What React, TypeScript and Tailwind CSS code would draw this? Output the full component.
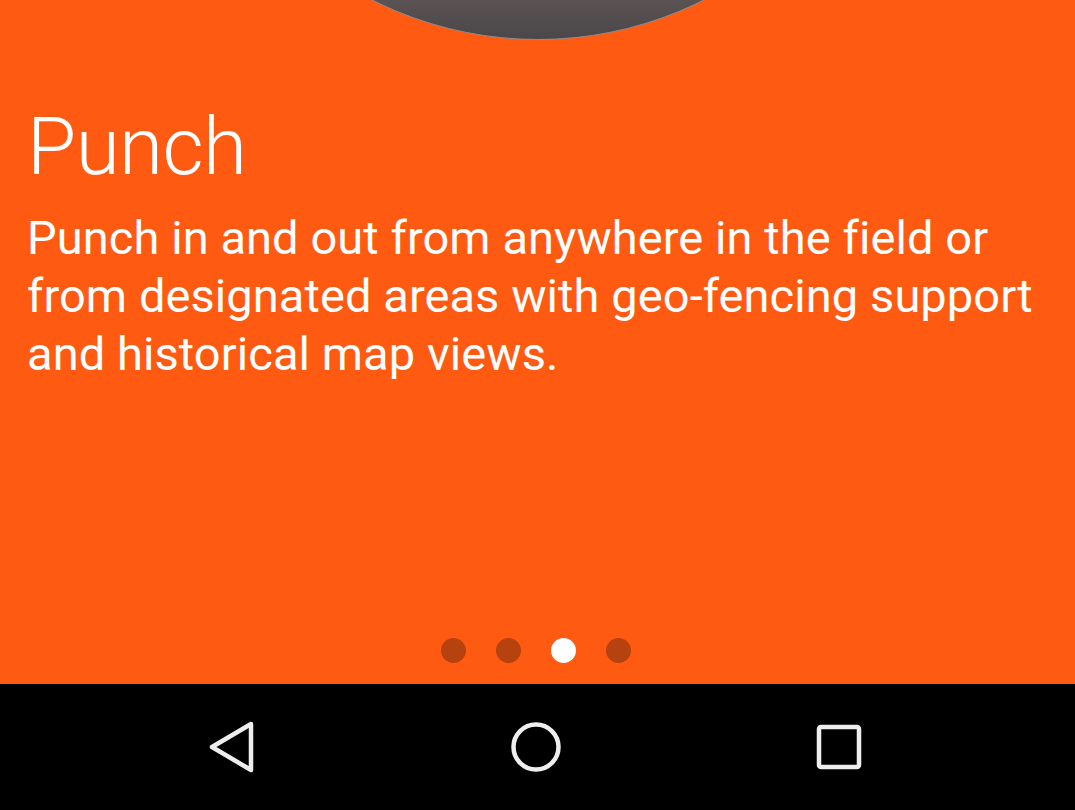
const dots = [false, false, true, false];

export default function App() {
  return (
    <div className="w-[1075px] h-[810px] flex flex-col overflow-hidden bg-[#ff5a12] font-['Roboto',sans-serif]">
      <div className="flex-1 flex flex-col overflow-hidden">
        {/* header art, mostly cropped above the viewport */}
        <div className="h-[40px] flex justify-center overflow-visible">
          <div className="shrink-0 w-[738px] h-[738px] mt-[-698px] rounded-full bg-gradient-to-t from-[#4a474a] to-[#5d5454] to-6% border border-[#9a8a86]" />
        </div>

        <div className="px-[27px] pt-[59px] text-white">
          <h1 className="text-[80px] leading-[96px] font-light tracking-[-0.6px]">Punch</h1>
          <p className="mt-[14px] text-[47px] leading-[58px] font-normal tracking-[0.08px]">
            Punch in and out from anywhere in the field or from designated areas with geo-fencing support and
            historical map views.
          </p>
        </div>

        <div className="mt-auto mb-[21px] flex justify-center gap-[30px] pr-[3px]">
          {dots.map((active, i) => (
            <div
              key={i}
              className={active ? "w-[25px] h-[25px] rounded-full bg-white" : "w-[25px] h-[25px] rounded-full bg-[#b5420f]"}
            />
          ))}
        </div>
      </div>

      <div className="h-[126px] bg-black flex items-center justify-between pl-[206px] pr-[213px]">
        <svg width="50" height="52" viewBox="0 0 50 52" fill="none">
          <path d="M45 3 L6 26 L45 49 Z" stroke="#eeeeee" strokeWidth="4.5" strokeLinejoin="round" />
        </svg>
        <svg width="52" height="52" viewBox="0 0 52 52" fill="none">
          <circle cx="26" cy="26" r="22.5" stroke="#eeeeee" strokeWidth="4.5" />
        </svg>
        <svg width="46" height="46" viewBox="0 0 46 46" fill="none">
          <rect x="3" y="3" width="40" height="40" rx="2" stroke="#eeeeee" strokeWidth="4.5" />
        </svg>
      </div>
    </div>
  );
}
